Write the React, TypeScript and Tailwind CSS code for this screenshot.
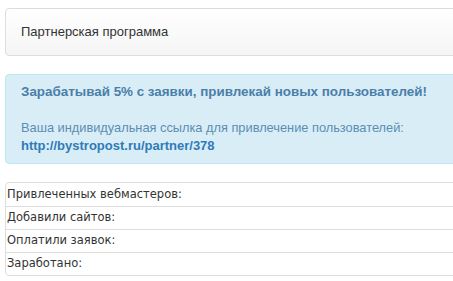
export default function App() {
  const rows = ["Привлеченных вебмастеров:", "Добавили сайтов:", "Оплатили заявок:", "Заработано:"];
  return (
    <div className="w-[453px] h-[281px] overflow-hidden bg-white">
      <div className="w-[470px] pl-[5px] pt-[8px]">
        <div className="h-[48px] flex items-center pl-[15px] border border-[#dddddd] rounded-[4px] bg-gradient-to-b from-white to-[#f5f5f5] text-[13px] text-[#333333] [font-family:'Liberation_Sans',Arial,sans-serif]">
          Партнерская программа
        </div>
        <div className="mt-[18px] h-[90px] pl-[15px] pt-[8px] border border-[#bce8f1] rounded-[4px] bg-[#d9edf7] text-[13px] leading-[18px] [font-family:'Liberation_Sans',Arial,sans-serif]">
          <div className="font-bold text-[13.4px] text-[#4a7fa8]">Зарабатывай 5% с заявки, привлекай новых пользователей!</div>
          <div className="mt-[18px] text-[12.8px] text-[#5b8db3]">Ваша индивидуальная ссылка для привлечение пользователей:</div>
          <div className="font-bold text-[#2e7bb8]">http://bystropost.ru/partner/378</div>
        </div>
        <div className="mt-[18px] border border-[#dddddd] rounded-[4px] text-[11.5px] text-[#333333] [font-family:'DejaVu_Sans',Verdana,sans-serif]">
          {rows.map((r, i) => (
            <div key={i} className={"h-[23px] flex items-center pl-[1px] " + (i > 0 ? "border-t border-[#dddddd]" : "")}>
              {r}
            </div>
          ))}
        </div>
      </div>
    </div>
  );
}
